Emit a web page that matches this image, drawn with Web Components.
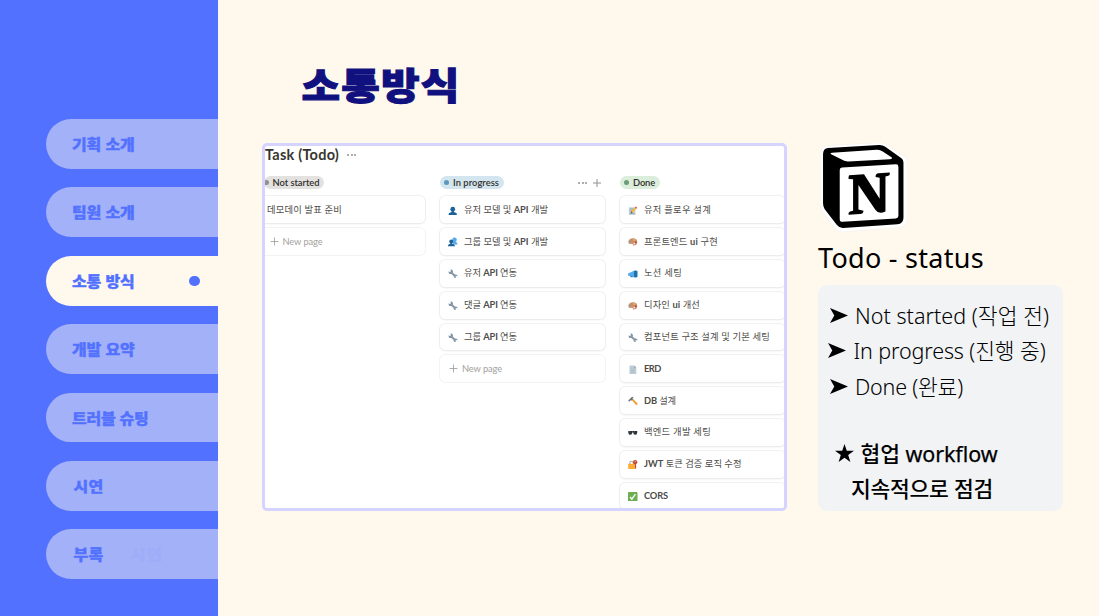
<!DOCTYPE html>
<html lang="ko">
<head>
<meta charset="utf-8">
<title>소통방식</title>
<style>
html,body{margin:0;height:100%;overflow:hidden;background:#fff9ed;font-family:"Noto Sans CJK KR",sans-serif}
</style>
</head>
<body>
<slide-page></slide-page>
<script>
const define=(name,html,setup)=>customElements.define(name,class extends HTMLElement{
  connectedCallback(){
    if(this.shadowRoot)return;
    this.attachShadow({mode:'open'}).innerHTML=html;
    if(setup)setup(this,this.shadowRoot);
  }
});

/* One line of text, tracked so that it fills the width given in "w". */
define('fit-text','<style>:host{display:block;white-space:pre;flex:none}span{display:inline-block}</style><span><slot></slot></span>',(el,root)=>{
  const span=root.querySelector('span'),w=+el.getAttribute('w');
  if(!w)return;
  el.style.width=w+'px';
  const n=[...el.textContent].length;
  const d=(w-span.getBoundingClientRect().width)/n;
  span.style.letterSpacing=d.toFixed(3)+'px';
});

const art={
 user:'<circle cx="8" cy="5.3" r="4" fill="#1d6299"/><path d="M6 8h4v2.200l4 1.500q1 .7 1 3.300H1q0-2.600 1-3.300l4-1.500z" fill="#1d6299"/>',
 users:'<circle cx="11" cy="4.500" r="3.800" fill="#55a9ec"/><path d="M8 8h5l2 1.500q1 1 1 3H9z" fill="#55a9ec"/><circle cx="5.500" cy="7.500" r="3.400" fill="#1d6299"/><path d="M4 10h3v1.500l3.500 1.200q1 .6 1 2.800H0q0-2.200 1-2.800L4 11.500z" fill="#1d6299"/>',
 wrench:'<path d="M.5 4 3.500 5 5 3.500 4 .5q4 .2 4.500 3.800L8 6l3.600 3.300q3.500-.4 4.300 2l.1 1.500-2-1-1.500 1.200.8 2.500q-3.800 0-4.200-4L5.500 8.500Q1 9 .5 4z" fill="#8496a5"/>',
 memo:'<path d="M1.500 2h11v13h-11z" fill="#c3d0d8"/><path d="M3 5h7M3 8h5M3 12.500h8" stroke="#7c8f9c" stroke-width="1"/><path d="m4.500 12 1-3.500 6-6.300 2.700 2.500-6.200 6.400z" fill="#f4b940"/><path d="m11.500 2.200 1.500-1.400L15.600 3l-1.400 1.700z" fill="#da4b50"/><path d="m4.500 12 1-3 2.300 2z" fill="#5b4a3d"/>',
 palette:'<path d="M.5 8Q1.500 2 8.500 2T15.500 9Q15 14.500 10 14.500q-2 0-2-2T5.500 11.500Q.2 12.500.5 8z" fill="#cf8d6b"/><circle cx="4" cy="8" r="1.300" fill="#56a8e0"/><circle cx="6.500" cy="5" r="1.300" fill="#8eae56"/><circle cx="10.500" cy="5" r="1.300" fill="#f6d056"/><circle cx="13.200" cy="8.500" r="1.500" fill="#c8383f"/><circle cx="10.500" cy="11.500" r="1.300" fill="#fff"/>',
 horn:'<path d="M0 7.500 10 3v11L0 11z" fill="#58aceb"/><path d="M10 3q5-1 6 1v9q-1 2-6 1z" fill="#1d73af"/><path d="M4 11v3h4v-2z" fill="#3787bd"/>',
 page:'<path d="M2.500 1h8L14 4.500V15H2.500z" fill="#bccbd5"/><path d="M10.500 1 14 4.500h-3.500z" fill="#91a5b3"/><path d="M5 7h6M5 9.500h6M5 12h6" stroke="#a8b9c4"/>',
 hammer:'<path d="m5.500 6 2.500-1.800 8 8.600q.3 2-2 2.700z" fill="#f39d31"/><path d="M.3 8 5.800 2q2-1.500 4.200-.5L7.500 3.500 8.300 5.500 5.500 8 4 7.200 2.200 9.500z" fill="#65727c"/>',
 glasses:'<path d="M.5 5h6.800q.7.600 1.400 0h6.800v2.800Q15 11.500 12 11.500T8.800 7.500H7.200Q7 11.500 4 11.500T.5 7.800z" fill="#2b3137"/><path d="m2 6.500 2 0M10 6.500h2" stroke="#718391" stroke-width="1"/>',
 lock:'<path d="M3 8V5Q3 2 6 2t3 3v3" fill="none" stroke="#a6b3bb" stroke-width="1.800"/><rect x=".3" y="6.500" width="11" height="9.200" rx="1.500" fill="#ffad33"/><path d="M12.500 5v9.500" stroke="#c24d32" stroke-width="2.300"/><circle cx="12" cy="3.800" r="3.600" fill="#c24d32"/><circle cx="12" cy="2.500" r=".8" fill="#fff"/>',
 check:'<rect width="16" height="16" rx="1.700" fill="#6fad51"/><path d="m3.500 8.500 3 3.500L12.500 3.500" fill="none" stroke="#fff" stroke-width="2.200"/>'
};
define('task-icon','<style>:host{display:block;width:9.500px;height:9.500px;flex:none}svg{display:block;width:100%;height:100%}</style>',(el,root)=>{
  root.innerHTML+='<svg viewBox="0 0 16 16">'+art[el.getAttribute('name')]+'</svg>';
});

define('nav-item',`<style>
:host{display:flex;align-items:center;box-sizing:border-box;height:49.900px;padding-left:26px;border-radius:25px 0 0 25px;background:#a3b1f8;color:#5271ff;font-size:16px;font-weight:900;position:relative}
:host([active]){background:#fff9ed}
::slotted(fit-text){-webkit-text-stroke:.4px currentColor;line-height:24px;transform:translateY(-.6px) scaleY(.9)}
i{display:none;width:10.500px;height:10.500px;border-radius:50%;background:#5271ff;margin-left:54.800px;margin-top:.5px}
:host([active]) i{display:block}
::slotted([slot=ghost]){margin-left:27px;color:#9dadf8}
</style><slot></slot><slot name="ghost"></slot><i></i>`);

define('side-nav',`<style>
:host{display:flex;flex-direction:column;gap:18.500px;box-sizing:border-box;width:217.600px;height:616px;padding:119px 0 0 46px;background:#5271ff;flex:none}
</style>
<nav-item><fit-text w="62.500">기획 소개</fit-text></nav-item>
<nav-item><fit-text w="62.500">팀원 소개</fit-text></nav-item>
<nav-item active><fit-text w="62.500">소통 방식</fit-text></nav-item>
<nav-item><fit-text w="62.500">개발 요약</fit-text></nav-item>
<nav-item><fit-text w="76.500">트러블 슈팅</fit-text></nav-item>
<nav-item style="padding-left:27.500px"><fit-text w="30">시연</fit-text></nav-item>
<nav-item style="padding-left:27.500px"><fit-text w="30">부록</fit-text><fit-text slot="ghost" w="33">시연</fit-text></nav-item>`);

define('task-card',`<style>
:host{display:flex;align-items:center;box-sizing:border-box;height:26.800px;padding-left:8.500px;border-radius:5px;background:#fff;box-shadow:0 0 0 .8px #ececeb,0 1px 2px rgba(0,0,0,.09);font-size:9.300px;color:#4e4c49;line-height:14px;flex:none;white-space:pre}
:host([new]){color:#a3a19e;box-shadow:0 0 0 .8px #f0f0ef}
task-icon{margin-right:6px;margin-top:1px}
svg{width:9px;height:9px;margin:0 3.500px 0 1px}
</style><slot></slot>`,(el,root)=>{
  const slot=root.querySelector('slot');
  if(el.hasAttribute('new'))slot.insertAdjacentHTML('beforebegin','<svg viewBox="0 0 9 9"><path d="M4.500.5v8M.5 4.500h8" stroke="#999" stroke-width=".8"/></svg>');
  else if(el.hasAttribute('icon'))slot.insertAdjacentHTML('beforebegin',`<task-icon name="${el.getAttribute('icon')}"></task-icon>`);
});

define('status-pill',`<style>
:host{display:flex;align-items:center;box-sizing:border-box;height:13px;padding:0 5px 0 4.500px;border-radius:7px;background:var(--bg);color:#32302c;font:600 9.400px/13px Lato,sans-serif;width:max-content}
i{width:5px;height:5px;border-radius:50%;background:var(--dot);margin-right:3.500px;flex:none}
</style><i></i><slot></slot>`);

define('more-dots',`<style>:host{display:flex;gap:1.700px}i{width:2px;height:2px;border-radius:50%;background:#969491}</style><i></i><i></i><i></i>`);

define('board-column',`<style>
:host{display:flex;flex-direction:column;gap:5px;width:165px;flex:none}
header{display:flex;align-items:center;height:13px;margin-bottom:2.200px}
</style><header><slot name="head"></slot></header><slot></slot>`);

define('task-board',`<style>
:host{display:block;box-sizing:border-box;width:525px;height:368.500px;border:3px solid #d5d3ff;border-radius:5px;background:#fff;overflow:hidden;font-family:Lato,"Noto Sans CJK KR",sans-serif}
.title{display:flex;align-items:center;gap:8px;height:18px;color:#37352f;font-weight:700;font-size:14.500px;line-height:18px}
.cols{display:flex;gap:15px;margin:12.700px 0 0 -4.500px}
.cols board-column:first-child{width:164.500px}
more-dots.act{margin-left:74px}
svg{width:8px;height:8px;margin-left:6px}
b{font-weight:700}
</style>
<div class="title"><fit-text w="74">Task (Todo)</fit-text><more-dots></more-dots></div>
<div class="cols">
<board-column>
<status-pill slot="head" style="--bg:#e3e2e0;--dot:#91918e;padding-left:0;margin-left:3.500px"><fit-text w="47">Not started</fit-text></status-pill>
<task-card style="padding-left:6.500px"><fit-text w="75">데모데이 발표 준비</fit-text></task-card>
<task-card new><fit-text w="40">New page</fit-text></task-card>
</board-column>
<board-column>
<status-pill slot="head" style="--bg:#d3e5ef;--dot:#5b97bd"><fit-text w="46">In progress</fit-text></status-pill>
<more-dots slot="head" class="act"></more-dots>
<svg slot="head" viewBox="0 0 8 8"><path d="M4 0v8M0 4h8" stroke="#91918e"/></svg>
<task-card icon="user"><fit-text w="84">유저 모델 및 <b>API</b> 개발</fit-text></task-card>
<task-card icon="users"><fit-text w="84">그룹 모델 및 <b>API</b> 개발</fit-text></task-card>
<task-card icon="wrench"><fit-text w="53">유저 <b>API</b> 연동</fit-text></task-card>
<task-card icon="wrench"><fit-text w="53">댓글 <b>API</b> 연동</fit-text></task-card>
<task-card icon="wrench"><fit-text w="53">그룹 <b>API</b> 연동</fit-text></task-card>
<task-card new><fit-text w="40">New page</fit-text></task-card>
</board-column>
<board-column>
<status-pill slot="head" style="--bg:#dbeddb;--dot:#6c9b7d"><fit-text w="22">Done</fit-text></status-pill>
<task-card icon="memo"><fit-text w="67">유저 플로우 설계</fit-text></task-card>
<task-card icon="palette"><fit-text w="74">프론트엔드 <b>ui</b> 구현</fit-text></task-card>
<task-card icon="horn"><fit-text w="38">노션 세팅</fit-text></task-card>
<task-card icon="palette"><fit-text w="56">디자인 <b>ui</b> 개선</fit-text></task-card>
<task-card icon="wrench"><fit-text w="126">컴포넌트 구조 설계 및 기본 세팅</fit-text></task-card>
<task-card icon="page"><fit-text w="17"><b>ERD</b></fit-text></task-card>
<task-card icon="hammer"><fit-text w="32"><b>DB</b> 설계</fit-text></task-card>
<task-card icon="glasses"><fit-text w="67">백엔드 개발 세팅</fit-text></task-card>
<task-card icon="lock"><fit-text w="97.500"><b>JWT</b> 토큰 검증 로직 수정</fit-text></task-card>
<task-card icon="check"><fit-text w="24"><b>CORS</b></fit-text></task-card>
</board-column>
</div>`);

define('notion-logo',`<style>:host{display:block;width:86px;height:88px}svg{display:block}</style>
<svg width="87" height="90" viewBox="0 0 86 88" preserveAspectRatio="none">
<path d="M8 2.500 59 -.3q3-.2 6 1.700L84 13.500q2 2 2 5V75q0 7-7 7.500L22 87q-4 .4-7-3L1.500 66Q0 63 0 59V11Q0 3.200 8 2.500z" fill="#fff" stroke="#efede7" stroke-width=".5"/>
<path d="M8 5 58.500 2q3.500-.1 6 1.700L80.500 15q2 1.500 2 4v54q0 6-6 6.500L23 83q-4 .3-6.500-3L4.500 64.500Q3 62 3 59V11Q3 5.500 8 5z" fill="#000"/>
<path d="m12 9.500 44-3q3.500-.2 6 1.700l9 6q1 1.300-2 1.700L28 18q-4 .2-7-2l-10-5Q9.500 9.800 12 9.500z" fill="#fff"/>
<path d="m22 24 53-3.200q2.500-.1 2.500 2.400v47.500q0 2.800-2.500 3L22.500 77q-3 .2-3-2.800V27q0-2.800 2.500-3z" fill="#fff"/>
<path d="m29 31.500 14.500-1 15.500 24V34l-4-.7q-.5-3.500 3-3.800l11-.6q.5 2.600-1.500 3l-2.800.8V67q-7 3-10-1.700L38 41v24l5 1.200q0 3-3.500 3.300l-11.300.7q-.5-2.500 1.500-3.200l3-.8V35.500l-4.500-.3q0-3.500.8-3.700z" fill="#000"/>
</svg>`);

define('status-line',`<style>
:host{display:flex;align-items:center;height:35.500px;font-size:21.500px;line-height:35px;font-weight:300}
svg{width:18px;height:15px;margin-right:7px;flex:none}
:host([star]){font-weight:500}:host([star]) svg{width:19px;height:18px;margin-right:6px}
</style><slot></slot>`,(el,root)=>{
  if(el.hasAttribute('plain'))return;
  root.querySelector('slot').insertAdjacentHTML('beforebegin',el.hasAttribute('star')
  ?'<svg viewBox="0 0 20 19"><path d="m10 0 2.400 7.100H20l-6.100 4.500 2.300 7.400L10 14.500 3.800 19l2.300-7.400L0 7.100h7.600z"/></svg>'
  :'<svg viewBox="0 0 18 15"><path d="M0 0 18 7.500 0 15 4.300 7.500z"/></svg>');
});

define('status-panel',`<style>
:host{display:block;width:245px;font-family:"Noto Sans","Noto Sans CJK KR",sans-serif;color:#000}
notion-logo{margin-left:2px}
h2{margin:8px 0 0;font-weight:400;font-size:27px;line-height:38px;height:38px}
section{box-sizing:border-box;margin-top:7.700px;height:226px;border-radius:9px;background:#f1f3f5;padding:13px 0 0 12px}
b{font-weight:400;-webkit-text-stroke:.25px #000}
</style>
<notion-logo></notion-logo>
<h2><fit-text w="166">Todo - status</fit-text></h2>
<section>
<status-line><fit-text w="194">Not started (작업 전)</fit-text></status-line>
<status-line style="margin-left:-1.500px"><fit-text w="192">In progress (진행 중)</fit-text></status-line>
<status-line><fit-text w="108">Done (완료)</fit-text></status-line>
<status-line star style="margin:31.500px 0 0 5.500px"><fit-text w="137">협업 <b>workflow</b></fit-text></status-line>
<status-line star plain style="margin-left:21px"><fit-text w="142">지속적으로 점검</fit-text></status-line>
</section>`);

define('slide-page',`<style>
:host{display:flex;width:1099px;height:616px;background:#fff9ed;overflow:hidden}
main{flex:none;margin-left:44.400px}
h1{margin:54px 0 0 39.500px;height:60px;font-weight:900;font-size:42px;line-height:60px;color:#10107e;-webkit-text-stroke:1.200px #10107e;transform:translateY(-.5px) scaleY(.89)}
task-board{margin-top:28.500px}
status-panel{margin:143px 0 0 31px}
</style>
<side-nav></side-nav>
<main><h1><fit-text w="159">소통방식</fit-text></h1><task-board></task-board></main>
<status-panel></status-panel>`);
</script>
</body>
</html>
